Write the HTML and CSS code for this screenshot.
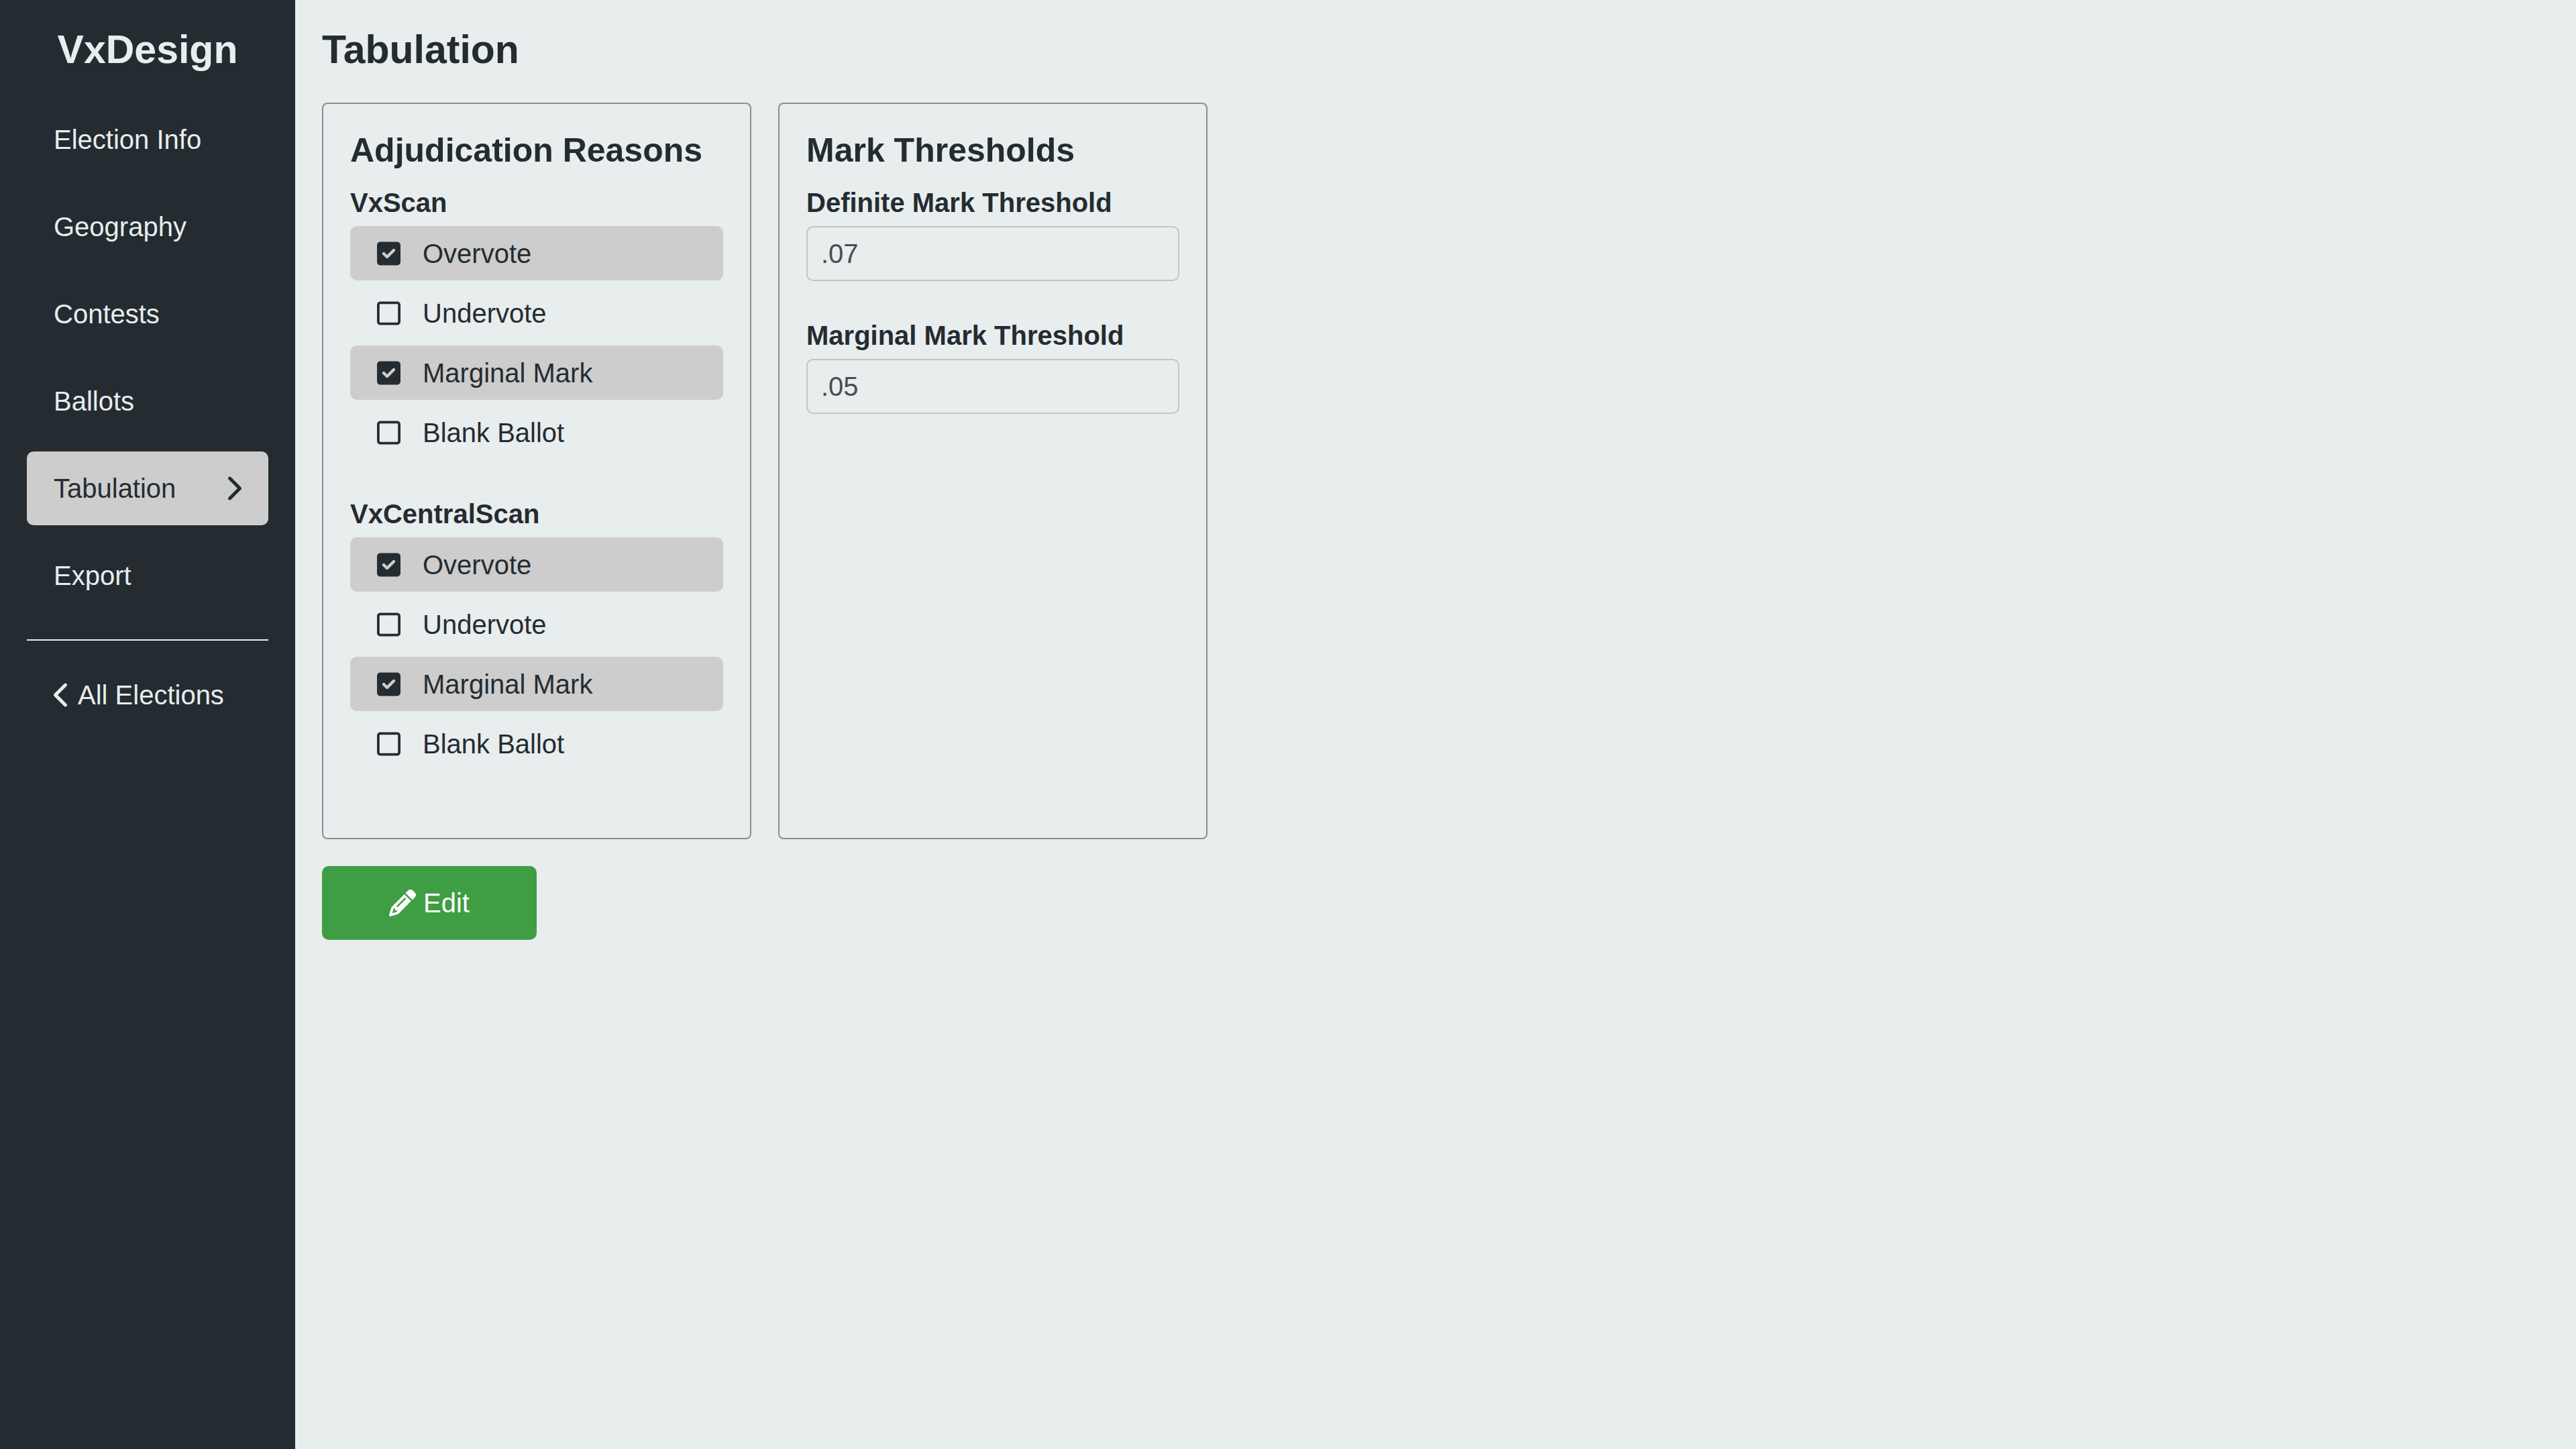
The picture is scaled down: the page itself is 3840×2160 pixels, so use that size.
FILE: index.html
```html
<!DOCTYPE html>
<html lang="en">
<head>
<meta charset="utf-8">
<title>VxDesign – Tabulation</title>
<link rel="stylesheet" href="styles.css">
</head>
<body>
<svg class="sprite" aria-hidden="true">
  <symbol id="chevron-right" viewBox="0 0 320 512"><path d="M96 480c-8.188 0-16.38-3.125-22.62-9.375c-12.5-12.5-12.5-32.75 0-45.25L242.8 256L73.38 86.63c-12.5-12.5-12.5-32.75 0-45.25s32.75-12.5 45.25 0l192 192c12.5 12.5 12.5 32.75 0 45.25l-192 192C112.4 476.9 104.2 480 96 480z"/></symbol>
  <symbol id="chevron-left" viewBox="0 0 320 512"><path d="M224 480c-8.188 0-16.38-3.125-22.62-9.375l-192-192c-12.5-12.5-12.5-32.75 0-45.25l192-192c12.5-12.5 32.75-12.5 45.25 0s12.5 32.75 0 45.25L77.25 256l169.4 169.4c12.5 12.5 12.5 32.75 0 45.25C240.4 476.9 232.2 480 224 480z"/></symbol>
  <symbol id="box-checked" viewBox="0 0 448 512"><path d="M384 32C419.3 32 448 60.65 448 96V416C448 451.3 419.3 480 384 480H64C28.65 480 0 451.3 0 416V96C0 60.65 28.65 32 64 32H384zM339.8 211.8C350.7 200.9 350.7 183.1 339.8 172.2C328.9 161.3 311.1 161.3 300.2 172.2L192 280.4L147.8 236.2C136.9 225.3 119.1 225.3 108.2 236.2C97.27 247.1 97.27 264.9 108.2 275.8L172.2 339.8C183.1 350.7 200.9 350.7 211.8 339.8L339.8 211.8z"/></symbol>
  <symbol id="box-empty" viewBox="0 0 448 512"><path d="M384 32C419.3 32 448 60.65 448 96V416C448 451.3 419.3 480 384 480H64C28.65 480 0 451.3 0 416V96C0 60.65 28.65 32 64 32H384zM384 80H64C55.16 80 48 87.16 48 96V416C48 424.8 55.16 432 64 432H384C392.8 432 400 424.8 400 416V96C400 87.16 392.8 80 384 80z"/></symbol>
  <symbol id="pencil" viewBox="0 0 512 512"><path d="M410.3 231l11.3-11.3-33.9-33.9-62.1-62.1L291.7 89.8l-11.3 11.3-22.6 22.6L58.6 322.9c-10.4 10.4-18 23.3-22.2 37.4L1 480.7c-2.5 8.4-.2 17.5 6.1 23.7s15.3 8.5 23.7 6.1l120.3-35.4c14.1-4.2 27-11.8 37.4-22.2L387.7 253.7 410.3 231zM160 399.4l-9.1 22.7c-4 3.1-8.5 5.4-13.3 6.9L59.4 452l23-78.1c1.4-4.9 3.8-9.4 6.9-13.3l22.7-9.1v32c0 8.8 7.2 16 16 16h32zM362.7 18.7L348.3 33.2 325.7 55.8 314.3 67.1l33.9 33.9 62.1 62.1 33.9 33.9 11.3-11.3 22.6-22.6 14.5-14.5c25-25 25-65.5 0-90.5L453.3 18.7c-25-25-65.5-25-90.5 0zm-47.4 168l-144 144c-6.2 6.2-16.4 6.2-22.6 0s-6.2-16.4 0-22.6l144-144c6.2-6.2 16.4-6.2 22.6 0s6.2 16.4 0 22.6z"/></symbol>
</svg>

<div class="app">
  <aside class="sidebar">
    <div class="brand">VxDesign</div>
    <nav class="nav">
      <a class="nav-link" href="#election-info">Election Info</a>
      <a class="nav-link" href="#geography">Geography</a>
      <a class="nav-link" href="#contests">Contests</a>
      <a class="nav-link" href="#ballots">Ballots</a>
      <a class="nav-link nav-link-active" href="#tabulation" aria-current="page">Tabulation
        <svg class="icon icon-chevron" aria-hidden="true"><use href="#chevron-right"/></svg></a>
      <a class="nav-link" href="#export">Export</a>
    </nav>
    <hr class="divider">
    <a class="nav-link nav-link-back" href="#elections"><svg class="icon icon-chevron" aria-hidden="true"><use href="#chevron-left"/></svg>All Elections</a>
  </aside>

  <main class="content">
    <h1 class="page-title">Tabulation</h1>
    <form class="form">
      <div class="cards">
        <section class="card">
          <h2 class="card-title">Adjudication Reasons</h2>
          <fieldset class="group">
            <legend class="group-label">VxScan</legend>
            <div class="options">
              <label class="option"><input class="option-input" type="checkbox" checked disabled><svg class="icon mark mark-on" aria-hidden="true"><use href="#box-checked"/></svg><svg class="icon mark mark-off" aria-hidden="true"><use href="#box-empty"/></svg><span>Overvote</span></label>
              <label class="option"><input class="option-input" type="checkbox" disabled><svg class="icon mark mark-on" aria-hidden="true"><use href="#box-checked"/></svg><svg class="icon mark mark-off" aria-hidden="true"><use href="#box-empty"/></svg><span>Undervote</span></label>
              <label class="option"><input class="option-input" type="checkbox" checked disabled><svg class="icon mark mark-on" aria-hidden="true"><use href="#box-checked"/></svg><svg class="icon mark mark-off" aria-hidden="true"><use href="#box-empty"/></svg><span>Marginal Mark</span></label>
              <label class="option"><input class="option-input" type="checkbox" disabled><svg class="icon mark mark-on" aria-hidden="true"><use href="#box-checked"/></svg><svg class="icon mark mark-off" aria-hidden="true"><use href="#box-empty"/></svg><span>Blank Ballot</span></label>
            </div>
          </fieldset>
          <fieldset class="group">
            <legend class="group-label">VxCentralScan</legend>
            <div class="options">
              <label class="option"><input class="option-input" type="checkbox" checked disabled><svg class="icon mark mark-on" aria-hidden="true"><use href="#box-checked"/></svg><svg class="icon mark mark-off" aria-hidden="true"><use href="#box-empty"/></svg><span>Overvote</span></label>
              <label class="option"><input class="option-input" type="checkbox" disabled><svg class="icon mark mark-on" aria-hidden="true"><use href="#box-checked"/></svg><svg class="icon mark mark-off" aria-hidden="true"><use href="#box-empty"/></svg><span>Undervote</span></label>
              <label class="option"><input class="option-input" type="checkbox" checked disabled><svg class="icon mark mark-on" aria-hidden="true"><use href="#box-checked"/></svg><svg class="icon mark mark-off" aria-hidden="true"><use href="#box-empty"/></svg><span>Marginal Mark</span></label>
              <label class="option"><input class="option-input" type="checkbox" disabled><svg class="icon mark mark-on" aria-hidden="true"><use href="#box-checked"/></svg><svg class="icon mark mark-off" aria-hidden="true"><use href="#box-empty"/></svg><span>Blank Ballot</span></label>
            </div>
          </fieldset>
        </section>

        <section class="card">
          <h2 class="card-title">Mark Thresholds</h2>
          <div class="group">
            <label class="group-label" for="definite">Definite Mark Threshold</label>
            <input class="text-input" id="definite" type="text" value=".07" disabled>
          </div>
          <div class="group">
            <label class="group-label" for="marginal">Marginal Mark Threshold</label>
            <input class="text-input" id="marginal" type="text" value=".05" disabled>
          </div>
        </section>
      </div>
      <button class="button" type="button"><svg class="icon icon-pencil" aria-hidden="true"><use href="#pencil"/></svg>Edit</button>
    </form>
  </main>
</div>
</body>
</html>
```

FILE: styles.css
```css
:root {
  --ink: #242c31;
  --paper: #e8edee;
  --selected: #cdcdcd;
  --outline: #8f8d90;
  --outline-light: #c4c4c6;
  --primary: #3f9d43;
}

* {
  box-sizing: border-box;
}

body {
  margin: 0;
  background: var(--paper);
  color: var(--ink);
  font-family: "Liberation Sans", Arial, Helvetica, sans-serif;
  font-size: 40px;
  line-height: 48px;
}

.sprite {
  display: none;
}

.icon {
  flex: none;
  height: 40px;
  fill: currentColor;
}

.icon-chevron {
  width: 25px;
}

.icon-pencil {
  width: 40px;
}

.app {
  display: flex;
  min-height: 100vh;
}

/* Sidebar */
.sidebar {
  flex: none;
  width: 440px;
  padding: 40px;
  background: var(--ink);
  color: var(--paper);
}

.brand,
.page-title {
  margin: 0 0 45px;
  font-size: 59px;
  font-weight: bold;
  line-height: 68px;
}

.brand {
  text-align: center;
}

.nav {
  display: flex;
  flex-direction: column;
  gap: 20px;
}

.nav-link {
  display: flex;
  align-items: center;
  justify-content: space-between;
  min-height: 110px;
  padding: 0 40px;
  border-radius: 10px;
  color: inherit;
  text-decoration: none;
}

.nav-link-active {
  background: var(--selected);
  color: var(--ink);
}

.nav-link-back {
  justify-content: flex-start;
  gap: 11px;
}

.divider {
  height: 2px;
  margin: 40px 0 26px;
  border: 0;
  background: var(--paper);
}

/* Main area */
.content {
  flex: 1;
  padding: 40px;
}

.form {
  display: flex;
  flex-direction: column;
  align-items: flex-start;
  gap: 40px;
}

.cards {
  display: flex;
  flex-wrap: wrap;
  gap: 40px;
}

.card {
  width: 640px;
  padding: 40px;
  border: 2px solid var(--outline);
  border-radius: 8px;
}

.card-title {
  margin: 0 0 28px;
  font-size: 50px;
  font-weight: bold;
  line-height: 58px;
}

.group {
  min-width: 0;
  margin: 0 0 60px;
  padding: 0;
  border: 0;
}

.group-label {
  display: block;
  margin-bottom: 14px;
  padding: 0;
  font-weight: bold;
  line-height: 42px;
}

.options {
  display: flex;
  flex-direction: column;
  gap: 8px;
}

.option {
  display: grid;
  grid-template-columns: 35px 1fr;
  column-gap: 33px;
  align-items: center;
  min-height: 81px;
  padding: 0 40px;
  border-radius: 10px;
}

.option:has(:checked) {
  background: var(--selected);
}

.option-input,
.mark {
  grid-area: 1 / 1;
  width: 35px;
}

.option-input {
  height: 35px;
  margin: 0;
  appearance: none;
}

.option-input:checked ~ .mark-off,
.option-input:not(:checked) ~ .mark-on {
  display: none;
}

.text-input {
  display: block;
  width: 100%;
  height: 82px;
  padding: 0 20px;
  border: 2px solid var(--outline-light);
  border-radius: 10px;
  background: transparent;
  color: #4c4c4c;
  font: inherit;
}

.button {
  display: flex;
  align-items: center;
  justify-content: center;
  gap: 11px;
  min-width: 320px;
  min-height: 110px;
  padding: 0 40px;
  border: 0;
  border-radius: 10px;
  background: var(--primary);
  color: #fff;
  font: inherit;
}
```
